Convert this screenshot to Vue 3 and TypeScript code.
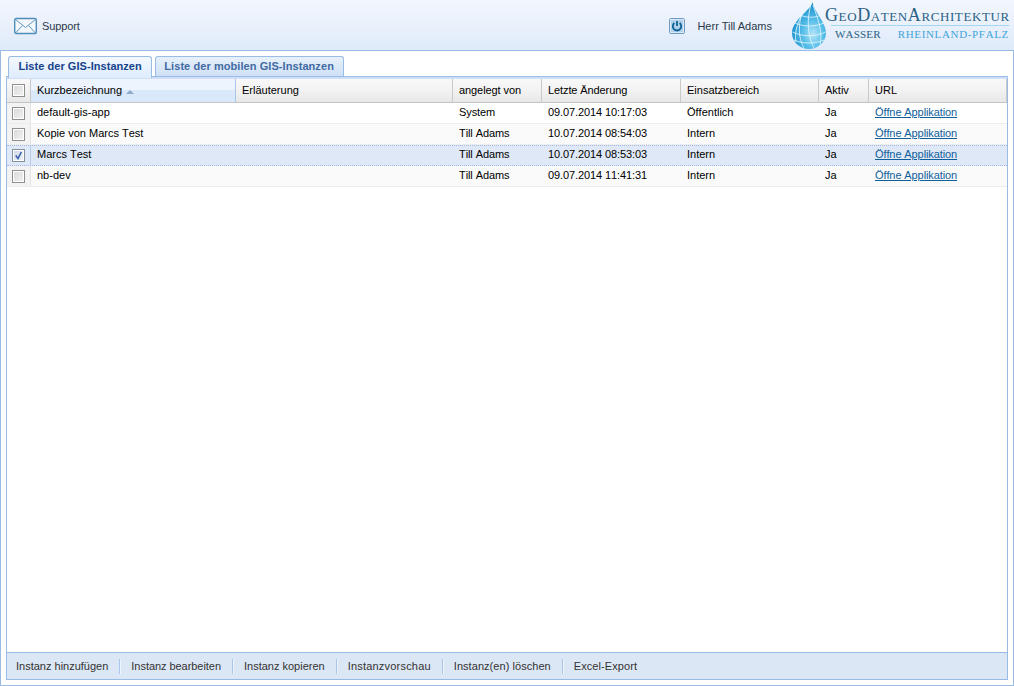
<script setup lang="ts">
interface Row { name: string; by: string; date: string; area: string; selected?: boolean }
interface Action { label: string; track: number }
const rows: Row[] = [
  { name: 'default-gis-app', by: 'System', date: '09.07.2014 10:17:03', area: 'Öffentlich' },
  { name: 'Kopie von Marcs Test', by: 'Till Adams', date: '10.07.2014 08:54:03', area: 'Intern' },
  { name: 'Marcs Test', by: 'Till Adams', date: '10.07.2014 08:53:03', area: 'Intern', selected: true },
  { name: 'nb-dev', by: 'Till Adams', date: '09.07.2014 11:41:31', area: 'Intern' },
]
const actions: Action[] = [
  { label: 'Instanz hinzufügen', track: 0 },
  { label: 'Instanz bearbeiten', track: -0.05 },
  { label: 'Instanz kopieren', track: 0 },
  { label: 'Instanzvorschau', track: 0.2 },
  { label: 'Instanz(en) löschen', track: 0.05 },
  { label: 'Excel-Export', track: 0.08 },
]
</script>

<template>
  <div class="page">
    <header class="top">
      <a class="support">
        <svg width="24" height="18" viewBox="0 0 24 18">
          <rect x="0.7" y="1.5" width="21.600" height="15" rx="1.5" fill="#f4f8fd" stroke="#4f8db8" stroke-width="1.4" />
          <path d="M1.500 2.500 11.500 10.500 21.500 2.500M1.500 16 8.500 8.500M21.500 16 14.500 8.500" fill="none" stroke="#5c96be" stroke-width="1" />
        </svg>
        <span>Support</span>
      </a>
      <div class="user">
        <svg class="power" width="16" height="16" viewBox="0 0 16 16">
          <rect x="0.5" y="0.5" width="15" height="15" rx="1.5" fill="#b3d1e9" stroke="#6f9cc0" />
          <rect x="1.5" y="1.5" width="13" height="13" fill="none" stroke="#dbe9f6" />
          <path d="M5.400 5a4.200 4.200 0 1 0 5.200 0" fill="none" stroke="#0f6299" stroke-width="1.800" />
          <path d="M8 2.900v5" stroke="#0f6299" stroke-width="1.800" />
        </svg>
        <span>Herr Till Adams</span>
      </div>
      <div class="logo">
        <svg class="drop" width="36" height="50" viewBox="0 0 36 50">
          <defs>
            <radialGradient id="dg" cx="0.62" cy="0.68" r="0.62">
              <stop offset="0" stop-color="#b4e4f8" />
              <stop offset="0.5" stop-color="#55bde8" />
              <stop offset="1" stop-color="#1f94d0" />
            </radialGradient>
          </defs>
          <path d="M21.500 2C20 10 1 20 1 33c0 9 8 16 17 16s17-7 17-16C35 22 23 12 21.500 2Z" fill="url(#dg)" />
          <path d="M9 15c7 3 15 3 21 0M4 23c8 4 20 4 29 0M1.500 32c10 5 23 5 33 0M3 40c9 4 21 4 30 0M12 11c-5 12-5 27 1 37M20 4c-4 14-4 31 3 44M22 5c5 14 10 27 7 41M15 8C7 20 3 32 5 42" fill="none" stroke="#e8f7fe" stroke-width="0.9" opacity="0.9" />
        </svg>
        <div class="wordmark">
          <div class="wm-title">GeoDatenArchitektur</div>
          <div class="wm-rule"></div>
          <div class="wm-sub"><span class="wm-a">WASSER</span><span class="wm-b">RHEINLAND-PFALZ</span></div>
        </div>
      </div>
    </header>

    <main class="panel">
      <nav class="tabs">
        <div class="tab active">Liste der GIS-Instanzen</div>
        <div class="tab">Liste der mobilen GIS-Instanzen</div>
      </nav>
      <section class="body">
        <div class="grid">
          <div class="row head">
            <div class="c c0"><span class="cb"></span></div>
            <div class="c c1 sorted">Kurzbezeichnung<i class="arrow"></i></div>
            <div class="c c2">Erläuterung</div>
            <div class="c c3">angelegt von</div>
            <div class="c c4">Letzte Änderung</div>
            <div class="c c5">Einsatzbereich</div>
            <div class="c c6">Aktiv</div>
            <div class="c c7">URL</div>
          </div>
          <div v-for="r in rows" :key="r.name" class="row item" :class="{ sel: r.selected }">
            <div class="c c0">
              <span class="cb">
                <svg v-if="r.selected" width="11" height="11" viewBox="0 0 11 11"><path d="M2.800 5.500 5 8.500 8.300 2" fill="none" stroke="#3a62ae" stroke-width="1.600" /></svg>
              </span>
            </div>
            <div class="c c1">{{ r.name }}</div>
            <div class="c c2"></div>
            <div class="c c3">{{ r.by }}</div>
            <div class="c c4">{{ r.date }}</div>
            <div class="c c5">{{ r.area }}</div>
            <div class="c c6">Ja</div>
            <div class="c c7"><a class="link">Öffne Applikation</a></div>
          </div>
        </div>
        <footer class="bar">
          <span v-for="a in actions" :key="a.label" class="act" :style="{ letterSpacing: a.track + 'px' }">{{ a.label }}</span>
        </footer>
      </section>
    </main>
  </div>
</template>

<style>
html, body { margin: 0; background: #fff; overflow: hidden; }
</style>

<style scoped>
.page {
  width: 1014px; height: 686px; display: flex; flex-direction: column;
  font: 11px "Liberation Sans", Arial, sans-serif; color: #000; font-kerning: none;
}
.top {
  height: 50px; flex: none; display: flex; align-items: center;
  background: linear-gradient(#f3f7fd, #dfeafa); color: #2b3a4a; overflow: hidden;
}
.support { display: flex; align-items: center; gap: 4px; margin: 2px 0 0 14px; letter-spacing: -0.1px; }
.support svg { display: block; }
.user { display: flex; align-items: center; gap: 12px; margin: 2px 0 0 auto; font-kerning: normal; }
.power { display: block; }
.logo { display: flex; width: 223px; margin-left: 19px; height: 50px; flex: none; }
.drop { display: block; flex: none; }
.wordmark { margin-left: -2px; width: 184px; font-family: "Liberation Serif", serif; }
.wm-title {
  font-size: 18px; font-variant: small-caps; letter-spacing: 0.6px; color: #2a6185; line-height: 20px;
  margin-top: 5px; white-space: nowrap;
}
.wm-rule { height: 1px; margin-left: 6px; background: #a2d8ef; }
.wm-sub { display: flex; justify-content: space-between; padding: 1px 0 0 10px; font-size: 11px; line-height: 14px; }
.wm-a { color: #2a5f82; letter-spacing: 0.2px; }
.wm-b { color: #3fa5d8; letter-spacing: 0.66px; }

.panel {
  flex: 1; border: 1px solid #99bbe8; display: flex; flex-direction: column; background: #fff; min-height: 0;
}
.tabs { display: flex; gap: 3px; padding: 5px 0 0 7px; height: 20px; flex: none; }
.tab {
  height: 20px; padding: 0 9px 0 8px; box-sizing: border-box; line-height: 19px; border: 1px solid #99bbe8; border-bottom: 0;
  border-radius: 3px 3px 0 0; font-weight: bold; color: #416aa3; background: linear-gradient(#e8f1fb, #cfe0f6);
  letter-spacing: 0.07px;
}
.tab.active { color: #15428b; background: linear-gradient(#f4f8fe, #deecfd); height: 22px; position: relative; z-index: 1; padding: 0 9.500px; letter-spacing: 0.045px; }
.body {
  flex: 1; margin: 0 5px 5px 5px; border: 1px solid #99bbe8; border-top-width: 3px; border-top-color: #cfe0f6; display: flex; flex-direction: column; min-height: 0;
  position: relative;
}
.body::before { content: ""; position: absolute; left: -1px; right: -1px; top: -3px; height: 1px; background: #99bbe8; }
.grid { flex: 1; min-height: 0; }
.row { display: flex; }
.c { box-sizing: border-box; padding-left: 6px; white-space: nowrap; overflow: hidden; }
.c0 { width: 24px; padding: 0; display: flex; align-items: center; justify-content: center; }
.c1 { width: 205px; }
.c2 { width: 217px; }
.c3 { width: 89px; letter-spacing: -0.08px; }
.c4 { width: 139px; letter-spacing: -0.1px; }
.c5 { width: 138px; }
.c6 { width: 50px; }
.c7 { width: 138px; }
.head { height: 24px; background: linear-gradient(#f8f8f8 0, #f3f3f3 45%, #e8e8e8 100%); border-bottom: 1px solid #c5c5c5; box-sizing: border-box; }
.head .c { line-height: 22px; border-right: 1px solid #c9c9c9; height: 23px; }
.head .sorted { background: linear-gradient(#eef4fd 0, #eef4fd 48%, #d9e8fb 48%, #d9e8fb 100%); border-right-color: #a9c4e8; }
.arrow { display: inline-block; width: 0; height: 0; margin-left: 4px; border: 4px solid transparent; border-top: 0; border-bottom: 4px solid #8ea9c9; vertical-align: 0; }
.item { height: 21px; box-sizing: border-box; border-bottom: 1px solid #ededed; }
.item:nth-child(odd) { background: #fafafa; }
.item .c { line-height: 19px; }
.item .c0 { background: #f3f3f3; border-right: 1px solid #e3e3e3; align-items: flex-start; padding-top: 4px; }
.item.sel { background: #dfe8f6; border-top: 1px dotted #a3bae9; border-bottom: 1px dotted #a3bae9; }
.item.sel .c { line-height: 17px; }
.item.sel .c0 { background: #dfe8f6; border-right-color: #b7cde9; padding-top: 3px; }
.cb {
  display: block; width: 11px; height: 11px; border: 1px solid #8f8f8f; box-shadow: inset 0 0 0 1px #fff; background: linear-gradient(135deg, #d8d8d8, #f3f3f3);
}
.cb svg { display: block; }
.sel .cb { border-color: #86919f; background: linear-gradient(135deg, #cfd8e6, #eef2f8); }
.link { color: #0f5f9c; text-decoration: underline; letter-spacing: -0.1px; }
.bar {
  height: 27px; flex: none; display: flex; align-items: center; background: #dce7f5; border-top: 1px solid #99bbe8; box-sizing: border-box; padding-left: 9px; color: #333;
}
.act { padding-right: 11px; margin-right: 11px; border-right: 1px solid #a9c6ea; line-height: 15px; box-shadow: 1px 0 0 #eef4fc; }
.act:last-child { border-right: 0; box-shadow: none; }
</style>
